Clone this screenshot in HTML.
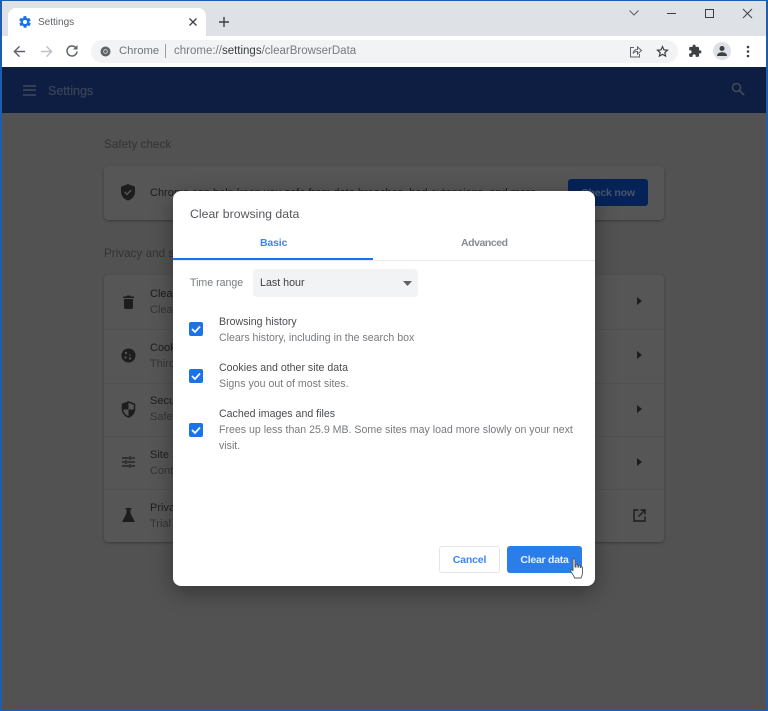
<!DOCTYPE html>
<html><head><meta charset="utf-8"><style>
*{box-sizing:border-box}
html,body{margin:0;padding:0;width:768px;height:711px;overflow:hidden;background:#515251;font-family:"Liberation Sans",sans-serif}
#w{position:absolute;left:0;top:0;width:768px;height:711px;filter:blur(.3px)}
.a{position:absolute;white-space:nowrap}
svg{position:absolute;overflow:visible}
.card{position:absolute;background:#565656;border-radius:4px;box-shadow:0 1px 2px rgba(0,0,0,.3)}
.t{position:absolute;white-space:nowrap;font-size:11px;line-height:14px;color:#1c1d1e}
.s{color:#333435}
.sep{position:absolute;left:104px;width:560px;height:1px;background:#505050}
.d{position:absolute;white-space:nowrap;font-size:10.6px;line-height:16px;color:#4a4c50}
.g{color:#777a7e}
.cb{position:absolute;left:189px;width:14px;height:14px;background:#1a73e8;border-radius:2px}
</style></head><body><div id="w">
<div class="a" style="left:0;top:0;width:768px;height:711px;background:#515251"></div>
<!-- title strip -->
<div class="a" style="left:0;top:0;width:768px;height:36px;background:#dee1e6"></div>
<!-- toolbar -->
<div class="a" style="left:0;top:36px;width:768px;height:31px;background:#fff"></div>
<!-- tab -->
<div class="a" style="left:8px;top:8px;width:198px;height:29px;background:#fff;border-radius:8px 8px 0 0"></div>
<svg style="left:18px;top:15px" width="14" height="14" viewBox="0 0 24 24"><path fill="#1a73e8" d="M19.4 13c0-.3.1-.6.1-1s0-.7-.1-1l2.1-1.6c.2-.2.2-.4.1-.6l-2-3.5c-.1-.2-.4-.3-.6-.2l-2.5 1c-.5-.4-1.1-.7-1.7-1l-.4-2.6c0-.3-.2-.5-.5-.5h-4c-.3 0-.5.2-.5.4l-.4 2.7c-.6.2-1.1.6-1.7 1l-2.5-1c-.2-.1-.5 0-.6.2l-2 3.5c-.1.2-.1.4.1.6L4.6 11c0 .3-.1.6-.1 1s0 .7.1 1l-2.1 1.6c-.2.2-.2.4-.1.6l2 3.5c.1.2.4.3.6.2l2.5-1c.5.4 1.1.7 1.7 1l.4 2.6c0 .2.2.4.5.4h4c.3 0 .5-.2.5-.4l.4-2.6c.6-.3 1.2-.6 1.7-1l2.5 1c.2.1.5 0 .6-.2l2-3.5c.1-.2.1-.4-.1-.6zM12 15.500a3.500 3.500 0 1 1 0-7 3.500 3.500 0 0 1 0 7z"/></svg>
<div class="a" style="left:38px;top:16px;font-size:10px;line-height:14px;color:#5f6368">Settings</div>
<svg style="left:188px;top:17px" width="10" height="10" viewBox="0 0 10 10"><path d="M1.5 1.5l7 7M8.500 1.500l-7 7" stroke="#3c4043" stroke-width="1.300"/></svg>
<svg style="left:218px;top:16px" width="12" height="12" viewBox="0 0 12 12"><path d="M6 1v10M1 6h10" stroke="#3c4043" stroke-width="1.400"/></svg>
<!-- window controls -->
<svg style="left:628px;top:9px" width="12" height="8" viewBox="0 0 12 8"><path d="M1.500 1.500L6 6l4.500-4.500" fill="none" stroke="#5f6368" stroke-width="1.100"/></svg>
<div class="a" style="left:667px;top:13px;width:9px;height:1px;background:#3c4043"></div>
<div class="a" style="left:705px;top:9px;width:9px;height:9px;border:1px solid #3c4043"></div>
<svg style="left:742px;top:8px" width="11" height="11" viewBox="0 0 11 11"><path d="M1 1l9 9M10 1l-9 9" stroke="#3c4043" stroke-width="1"/></svg>
<!-- nav -->
<svg style="left:13px;top:45px" width="13" height="13" viewBox="0 0 14 14"><path d="M13 7H2M7 1.500L1.500 7 7 12.500" fill="none" stroke="#5f6368" stroke-width="1.500"/></svg>
<svg style="left:40px;top:45px" width="13" height="13" viewBox="0 0 14 14"><path d="M1 7h11M7 1.500L12.500 7 7 12.500" fill="none" stroke="#bdc1c6" stroke-width="1.500"/></svg>
<svg style="left:65px;top:44px" width="14" height="14" viewBox="0 0 14 14"><path d="M12 7.500A5 5 0 1 1 10.600 3.500" fill="none" stroke="#5f6368" stroke-width="1.500"/><path d="M12.500 1v4.500H8z" fill="#5f6368"/></svg>
<!-- omnibox -->
<div class="a" style="left:91px;top:40px;width:587px;height:23px;background:#f1f3f4;border-radius:12px"></div>
<svg style="left:100px;top:46px" width="11" height="11" viewBox="0 0 11 11"><circle cx="5.500" cy="5.500" r="5" fill="#5f6368"/><circle cx="5.500" cy="5.500" r="2.200" fill="#f1f3f4"/><circle cx="5.500" cy="5.500" r="1.500" fill="#5f6368"/></svg>
<div class="a" style="left:119px;top:44px;font-size:11.300px;line-height:15px;color:#70757a">Chrome</div>
<div class="a" style="left:165px;top:44px;width:1px;height:14px;background:#9aa0a6"></div>
<div class="a" style="left:174px;top:44px;font-size:11.500px;line-height:15px;color:#777b80">chrome://<span style="color:#3c4043">settings</span>/clearBrowserData</div>
<!-- right toolbar icons -->
<svg style="left:629px;top:45px" width="13" height="13" viewBox="0 0 13 13"><path d="M5 2.500H1.500v9.500h9V9" fill="none" stroke="#5f6368" stroke-width="1"/><path d="M4 8.500C4.500 5.500 6.500 4.500 8.500 4.500V2l4 3.500-4 3.500V6.500C6.500 6.500 5 7 4 8.500z" fill="none" stroke="#5f6368" stroke-width="1"/></svg>
<svg style="left:656px;top:45px" width="13" height="13" viewBox="0 0 24 24"><path fill="none" stroke="#3c4043" stroke-width="2.200" d="M12 3l2.700 6 6.500.7-4.900 4.400 1.400 6.400L12 17.200l-5.700 3.300 1.400-6.400-4.900-4.400 6.500-.7z"/></svg>
<svg style="left:688px;top:44px" width="14" height="14" viewBox="0 0 24 24"><path fill="#3c4043" d="M20.500 11H19V7c0-1.100-.9-2-2-2h-4V3.500a2.500 2.500 0 0 0-5 0V5H4c-1.100 0-2 .9-2 2v3.800h1.500a2.700 2.700 0 0 1 0 5.400H2V20c0 1.100.9 2 2 2h3.800v-1.500a2.700 2.700 0 0 1 5.400 0V22H17c1.100 0 2-.9 2-2v-4h1.500a2.500 2.500 0 0 0 0-5z"/></svg>
<div class="a" style="left:713px;top:42px;width:18px;height:18px;border-radius:50%;background:#dee1e6"></div>
<svg style="left:716px;top:45px" width="12" height="12" viewBox="0 0 12 12"><circle cx="6" cy="3.500" r="2.500" fill="#3c4043"/><path d="M1 11c0-2.500 2.500-3.700 5-3.700s5 1.200 5 3.700z" fill="#3c4043"/></svg>
<svg style="left:746px;top:45px" width="4" height="13" viewBox="0 0 4 13"><circle cx="2" cy="2" r="1.300" fill="#3c4043"/><circle cx="2" cy="6.500" r="1.300" fill="#3c4043"/><circle cx="2" cy="11" r="1.300" fill="#3c4043"/></svg>
<!-- blue header -->
<div class="a" style="left:0;top:67px;width:768px;height:46px;background:#0e1e42"></div>
<div class="a" style="left:23px;top:85px;width:13px;height:1.500px;background:#353e54"></div>
<div class="a" style="left:23px;top:89px;width:13px;height:1.500px;background:#353e54"></div>
<div class="a" style="left:23px;top:94px;width:13px;height:1.500px;background:#353e54"></div>
<div class="a" style="left:48px;top:84px;font-size:12.500px;line-height:15px;color:#394258;-webkit-text-stroke:.25px #394258">Settings</div>
<svg style="left:731px;top:82px" width="14" height="14" viewBox="0 0 14 14"><circle cx="5.500" cy="5.500" r="4" fill="none" stroke="#424958" stroke-width="1.600"/><path d="M8.500 8.500l4.500 4.500" stroke="#424958" stroke-width="1.800"/></svg>
<!-- background content -->
<div class="t s" style="left:104px;top:138px;font-size:11.700px;letter-spacing:.03px">Safety check</div>
<div class="card" style="left:104px;top:166px;width:560px;height:54px"></div>
<svg style="left:120px;top:184px" width="16" height="17" viewBox="0 0 16 17"><path fill="#1c1d1e" d="M8 0l7 2.700v5c0 4-3 7.600-7 8.800C4 15.300 1 11.700 1 7.700v-5z"/><path d="M4.700 8l2.300 2.300 4.200-4.200" fill="none" stroke="#565656" stroke-width="1.500"/></svg>
<div class="t" style="left:150px;top:186px">Chrome can help keep you safe from data breaches, bad extensions, and more</div>
<div class="a" style="left:568px;top:179px;width:80px;height:27px;background:#062358;border-radius:3px;color:#48556b;font-size:10.500px;font-weight:bold;letter-spacing:-.2px;line-height:28px;text-align:center">Check now</div>
<div class="t s" style="left:104px;top:247px;font-size:11.700px">Privacy and security</div>
<div class="card" style="left:104px;top:275px;width:560px;height:267px"></div>
<div class="sep" style="top:329px"></div><div class="sep" style="top:383px"></div><div class="sep" style="top:436px"></div><div class="sep" style="top:489px"></div>
<svg style="left:123px;top:295px" width="11" height="14" viewBox="0 0 11 14"><path fill="#1c1d1e" d="M1 4h9v8.500c0 .8-.6 1.500-1.500 1.500h-6C1.600 14 1 13.300 1 12.500zM0 1.500h3L4 .5h3l1 1h3V3H0z"/></svg>
<svg style="left:121px;top:348px" width="15" height="15" viewBox="0 0 15 15"><circle cx="7.500" cy="7.500" r="7" fill="#1c1d1e"/><circle cx="5" cy="5" r="1.200" fill="#565656"/><circle cx="4.500" cy="9.500" r="1.200" fill="#565656"/><circle cx="9" cy="10.500" r="1.200" fill="#565656"/><circle cx="9" cy="7" r=".8" fill="#565656"/></svg>
<svg style="left:121px;top:401px" width="15" height="17" viewBox="0 0 15 17"><path fill="none" stroke="#1c1d1e" stroke-width="1.500" d="M7.500 1l6 2.300v4.700c0 3.700-2.500 6.800-6 8-3.500-1.200-6-4.300-6-8V3.300z"/><path fill="#1c1d1e" d="M7.500 1v7.500H1.500V3.300zM7.500 8.500h6c0 3.500-2.500 6.500-6 7.500z"/></svg>
<svg style="left:122px;top:456px" width="13" height="12" viewBox="0 0 13 12"><path stroke="#1c1d1e" stroke-width="1.200" d="M0 2h7M9 2h4M0 6h3M5 6h8M0 10h7M9 10h4M8 0v4M4 4v4M8 8v4"/></svg>
<svg style="left:122px;top:508px" width="13" height="14" viewBox="0 0 13 14"><path fill="#1c1d1e" d="M3.500 0h6v1.200H8.500v4L13 14H0L4.500 5.200v-4H3.500z"/></svg>
<div class="t" style="left:150px;top:287px">Clear browsing data</div><div class="t s" style="left:150px;top:303px">Clear history, cookies</div>
<div class="t" style="left:150px;top:341px">Cookies and other</div><div class="t s" style="left:150px;top:357px">Third-party cookies</div>
<div class="t" style="left:150px;top:394px">Security</div><div class="t s" style="left:150px;top:410px">Safe Browsing</div>
<div class="t" style="left:150px;top:448px">Site Settings</div><div class="t s" style="left:150px;top:464px">Controls what</div>
<div class="t" style="left:150px;top:501px">Privacy Sandbox</div><div class="t s" style="left:150px;top:517px">Trial features</div>
<svg style="left:637px;top:297px" width="5" height="8"><path d="M0 0l5 4-5 4z" fill="#1c1d1e"/></svg>
<svg style="left:637px;top:351px" width="5" height="8"><path d="M0 0l5 4-5 4z" fill="#1c1d1e"/></svg>
<svg style="left:637px;top:405px" width="5" height="8"><path d="M0 0l5 4-5 4z" fill="#1c1d1e"/></svg>
<svg style="left:637px;top:458px" width="5" height="8"><path d="M0 0l5 4-5 4z" fill="#1c1d1e"/></svg>
<svg style="left:633px;top:509px" width="13" height="13" viewBox="0 0 13 13"><path d="M5.500 1H1v11h11V7.500M7.500 1H12v4.500M12 1L5.500 7.500" fill="none" stroke="#1c1d1e" stroke-width="1.400"/></svg>
<!-- dialog -->
<div class="a" style="left:173px;top:191px;width:422px;height:395px;background:#fff;border-radius:8px;box-shadow:0 6px 22px rgba(0,0,0,.35)"></div>
<div class="a" style="left:190px;top:207px;font-size:12.300px;line-height:15px;color:#55585c">Clear browsing data</div>
<div class="a" style="left:260px;top:236px;font-size:10.500px;letter-spacing:-.15px;line-height:14px;font-weight:bold;color:#3b87ee">Basic</div>
<div class="a" style="left:461px;top:236px;font-size:10.500px;letter-spacing:-.45px;line-height:14px;font-weight:bold;color:#888c90">Advanced</div>
<div class="a" style="left:173px;top:260px;width:422px;height:1px;background:#e8eaed"></div>
<div class="a" style="left:173px;top:258px;width:200px;height:2px;background:#1a73e8"></div>
<div class="d g" style="left:190px;top:275px">Time range</div>
<div class="a" style="left:253px;top:269px;width:165px;height:28px;background:#f1f3f4;border-radius:4px"></div>
<div class="d" style="left:260px;top:275px;color:#3c4043;font-size:10.700px">Last hour</div>
<svg style="left:403px;top:281px" width="9" height="5"><path d="M0 0h9L4.500 5z" fill="#5f6368"/></svg>
<div class="cb" style="top:322px"></div>
<svg style="left:189px;top:322px" width="14" height="14"><path d="M3 7l3 3 5-5.500" fill="none" stroke="#fff" stroke-width="1.700"/></svg>
<div class="cb" style="top:369px"></div>
<svg style="left:189px;top:369px" width="14" height="14"><path d="M3 7l3 3 5-5.500" fill="none" stroke="#fff" stroke-width="1.700"/></svg>
<div class="cb" style="top:423px"></div>
<svg style="left:189px;top:423px" width="14" height="14"><path d="M3 7l3 3 5-5.500" fill="none" stroke="#fff" stroke-width="1.700"/></svg>
<div class="d" style="left:219px;top:314px">Browsing history</div>
<div class="d g" style="left:219px;top:330px">Clears history, including in the search box</div>
<div class="d" style="left:219px;top:360px">Cookies and other site data</div>
<div class="d g" style="left:219px;top:376px">Signs you out of most sites.</div>
<div class="d" style="left:219px;top:406px">Cached images and files</div>
<div class="d g" style="left:219px;top:422px">Frees up less than 25.9 MB. Some sites may load more slowly on your next</div>
<div class="d g" style="left:219px;top:438px">visit.</div>
<div class="a" style="left:439px;top:546px;width:61px;height:27px;background:#fff;border:1px solid #e3e5e8;border-radius:3px;color:#3b87ee;font-size:10.500px;letter-spacing:-.15px;font-weight:bold;line-height:27px;text-align:center">Cancel</div>
<div class="a" style="left:507px;top:546px;width:75px;height:27px;background:#2b7de9;border-radius:3px;color:#e8f0fe;font-size:10.500px;letter-spacing:-.25px;font-weight:bold;line-height:28px;text-align:center">Clear data</div>
<!-- hand cursor -->
<svg style="left:570px;top:558px" width="14" height="21" viewBox="0 0 14 21"><path d="M3 1.500c0-1 2-1 2 0V9l1 0V7c0-1 1.800-1 1.800 0v2h.7V8c0-1 1.700-1 1.700 0v1.500h.5c0-1 1.800-1 1.800 .3V15c0 2-1 3-1.500 5H4.500C4 18 3 16.500 1.500 14.500 .5 13 .5 11.500 1.500 11.500 2 11.500 2.500 12 3 13z" fill="#fff" stroke="#555" stroke-width=".9"/></svg>
<!-- window border -->
<div class="a" style="left:0;top:0;width:768px;height:711px;border:1px solid #1d5fae;border-left-width:2px;border-right-width:2px;pointer-events:none"></div>
</div></body></html>
